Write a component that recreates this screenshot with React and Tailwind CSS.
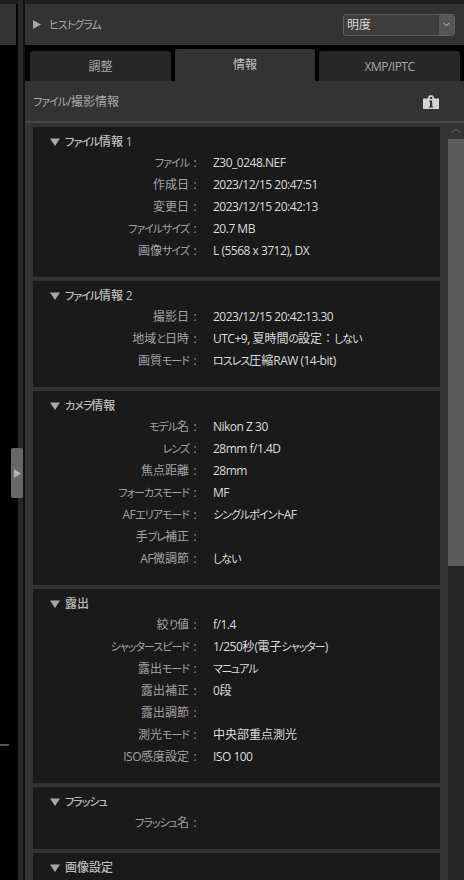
import React from 'react';

const FONT = '"Open Sans", "Noto Sans CJK JP", sans-serif';

const sections = [
  {
    title: 'ファイル情報 1',
    height: 'h-[150px]',
    rows: [
      ['ファイル', 'Z30_0248.NEF'],
      ['作成日', '2023/12/15 20:47:51'],
      ['変更日', '2023/12/15 20:42:13'],
      ['ファイルサイズ', '20.7 MB'],
      ['画像サイズ', 'L (5568 x 3712), DX'],
    ],
  },
  {
    title: 'ファイル情報 2',
    height: 'h-[106px]',
    rows: [
      ['撮影日', '2023/12/15 20:42:13.30'],
      ['地域と日時', 'UTC+9, 夏時間の設定：しない'],
      ['画質モード', 'ロスレス圧縮RAW (14-bit)'],
    ],
  },
  {
    title: 'カメラ情報',
    height: 'h-[194px]',
    rows: [
      ['モデル名', 'Nikon Z 30'],
      ['レンズ', '28mm f/1.4D'],
      ['焦点距離', '28mm'],
      ['フォーカスモード', 'MF'],
      ['AFエリアモード', 'シングルポイントAF'],
      ['手ブレ補正', ''],
      ['AF微調節', 'しない'],
    ],
  },
  {
    title: '露出',
    height: 'h-[194px]',
    rows: [
      ['絞り値', 'f/1.4'],
      ['シャッタースピード', '1/250秒(電子シャッター)'],
      ['露出モード', 'マニュアル'],
      ['露出補正', '0段'],
      ['露出調節', ''],
      ['測光モード', '中央部重点測光'],
      ['ISO感度設定', 'ISO 100'],
    ],
  },
  {
    title: 'フラッシュ',
    height: 'h-[62px]',
    rows: [['フラッシュ名', '']],
  },
  {
    title: '画像設定',
    height: 'h-[60px]',
    rows: [],
  },
];

// latin and kana runs are narrower than the kanji around them
const Txt = ({ children }) =>
  children.split(/([\x20-\x7e]+|[\u3041-\u30ff]+|：)/).map((part, i) => {
    if (/^[\x20-\x7e]+$/.test(part)) {
      return (
        <span key={i} className="tracking-[-0.5px]">
          {part}
        </span>
      );
    }
    if (/^[\u3041-\u30ff]+$/.test(part)) {
      return (
        <span key={i} className="text-[11px] tracking-[-1px]">
          {part}
        </span>
      );
    }
    if (part === '：') {
      return (
        <span key={i} className="[font-feature-settings:normal]">
          {part}
        </span>
      );
    }
    return part;
  });

const Triangle = ({ className }) => (
  <svg width="10" height="10" viewBox="0 0 10 10" className={className}>
    <path d="M0 1.5h10L5 9z" fill="currentColor" />
  </svg>
);

const InfoCamera = () => (
  <svg width="16" height="14" viewBox="0 0 16 14">
    <path
      d="M0 3.5h4.6L5.6 1.2C5.9.5 6.3.2 7 .2h2c.7 0 1.1.3 1.4 1l1 2.3H16V14H0z"
      fill="#d4d4d4"
    />
    <rect x="7" y="2" width="2.2" height="2" fill="#333333" />
    <path d="M6 5.4h3.2v6h1.2v1.2H5.8v-1.2H7V6.6H6z" fill="#333333" />
  </svg>
);

const Section = ({ title, height, rows }) => (
  <div className={`${height} shrink-0 bg-[#1a1a1a] pt-[6px]`}>
    <div className="flex h-[18px] items-center pl-[17px] text-[12px] font-medium text-[#bdbdbd]">
      <Triangle className="mr-[5px] text-[#a8a8a8]" />
      <span>
        <Txt>{title}</Txt>
      </span>
    </div>
    <div className="mt-[1px]">
      {rows.map(([label, value]) => (
        <div key={label} className="flex h-[22px] items-center text-[12px]">
          <span className="w-[156px] shrink-0 whitespace-nowrap text-right text-[#a3a3a3]">
            <Txt>{label}</Txt>
          </span>
          <span className="w-[12px] shrink-0 text-center text-[#a3a3a3]">:</span>
          <span className="ml-[12px] whitespace-nowrap text-[#dcdcdc]">
            <Txt>{value}</Txt>
          </span>
        </div>
      ))}
    </div>
  </div>
);

const Tab = ({ label, active }) => (
  <div
    className={
      active
        ? 'flex h-[32px] w-[140px] items-center justify-center rounded-t-[3px] bg-[#333333] text-[12px] text-[#c4c4c4]'
        : 'flex h-[30px] w-[141px] items-center justify-center rounded-t-[3px] bg-[#272727] pt-[1px] text-[12px] text-[#a6a6a6]'
    }
  >
    <span>
      <Txt>{label}</Txt>
    </span>
  </div>
);

export default function App() {
  return (
    <div
      className="relative flex h-[880px] w-[464px] overflow-hidden bg-black [font-feature-settings:'palt']"
      style={{ fontFamily: FONT }}
    >
      {/* left image area edge */}
      <div className="flex w-[18px] shrink-0 flex-col">
        <div className="h-[4px] bg-[#1e1e1e]" />
        <div className="h-[41px] w-[16px] bg-[#333333]" />
        <div className="mt-[699px] h-[2px] w-[9px] bg-[#555555]" />
      </div>
      <div className="w-[5px] shrink-0 bg-[#262626]" />
      <div className="w-[2px] shrink-0 bg-[#111111]" />

      {/* right panel */}
      <div className="flex min-w-0 flex-1 flex-col">
        <div className="h-[4px] shrink-0 bg-[#1e1e1e]" />
        <div className="flex h-[41px] shrink-0 items-center bg-[#333333] pl-[8px] pr-[9px]">
          <svg width="8" height="9" viewBox="0 0 8 9" className="text-[#a6a6a6]">
            <path d="M0 0l8 4.5L0 9z" fill="currentColor" />
          </svg>
          <span className="ml-[8px] pt-[1px] text-[12px] text-[#a6a6a6]">
            <Txt>ヒストグラム</Txt>
          </span>
          <div className="ml-auto flex h-[22px] w-[112px] items-center overflow-hidden rounded-[3px] border border-[#5e5e5e] bg-[#3d3d3d] text-[12px] text-[#d8d8d8]">
            <span className="flex-1 pl-[3px]">明度</span>
            <span className="flex h-full w-[15px] items-center justify-center bg-[#565656]">
              <svg width="7" height="5" viewBox="0 0 7 5">
                <path d="M.5 1l3 2.5 3-2.5" fill="none" stroke="#c8c8c8" />
              </svg>
            </span>
          </div>
        </div>

        <div className="flex h-[36px] shrink-0 items-end gap-[4px] bg-black pl-[5px]">
          <Tab label="調整" />
          <Tab label="情報" active />
          <Tab label="XMP/IPTC" />
        </div>

        <div className="flex h-[40px] shrink-0 items-center justify-between bg-[#333333] pl-[8px] pr-[25px] text-[12px] text-[#ababab]">
          <span className="pt-[2px]">
            <Txt>ファイル/撮影情報</Txt>
          </span>
          <span className="flex pt-[2px]">
            <InfoCamera />
          </span>
        </div>
        <div className="h-[2px] shrink-0 bg-[#484848]" />

        <div className="flex min-h-0 flex-1 bg-[#333333]">
          <div className="flex min-w-0 flex-1 flex-col gap-[4px] pb-0 pl-[8px] pr-[8px] pt-[4px]">
            {sections.map((s) => (
              <Section key={s.title} {...s} />
            ))}
          </div>
          {/* scrollbar */}
          <div className="flex w-[16px] shrink-0 flex-col bg-[#262626]">
            <div className="flex h-[16px] items-center justify-center bg-[#333333]">
              <svg width="10" height="6" viewBox="0 0 10 6">
                <path d="M.5 5L5 1l4.5 4" fill="none" stroke="#6e6e6e" />
              </svg>
            </div>
            <div className="h-[427px] bg-[#5c5c5c]" />
          </div>
        </div>
      </div>

      {/* collapse handle */}
      <div className="absolute left-[11px] top-[448px] flex h-[50px] w-[12px] items-center justify-center rounded-[2px] bg-[#676767]">
        <svg width="7" height="9" viewBox="0 0 7 9">
          <path d="M0 0l7 4.5L0 9z" fill="#b4b4b4" />
        </svg>
      </div>
    </div>
  );
}
